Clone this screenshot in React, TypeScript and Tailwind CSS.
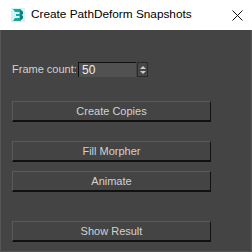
import React from "react";

function MaxIcon() {
  return (
    <svg width="16" height="16" viewBox="0 0 16 16" className="shrink-0">
      <rect x="1" y="1" width="14" height="14" fill="#d8f2f1" />
      <path d="M3 2h7l3 3v2l-2 1 2 1v2l-3 3H3l2-3h4l1-1-1-1H6V7h3l1-1-1-1H5z" fill="#14a8a8" />
      <path d="M10 2l3 3v2l-2 1 2 1v2l-3 3z" fill="#0b7f82" />
    </svg>
  );
}

function Btn({ label }: { label: string }) {
  return (
    <button className="w-[199px] h-[21px] bg-[#444444] border-t border-l border-t-[#5a5a5a] border-l-[#5a5a5a] border-r border-r-[#111111] border-b-2 border-b-[#111111] text-[11px] text-[#d2d2d2] leading-none">
      {label}
    </button>
  );
}

export default function App() {
  return (
    <div className="w-[252px] h-[252px] flex flex-col overflow-hidden" style={{ fontFamily: '"Liberation Sans", Arial, sans-serif' }}>
      <div className="h-[30px] bg-white flex items-center pl-[10px] pr-[9px] gap-[5px]">
        <MaxIcon />
        <span className="text-[11.8px] text-black flex-1 leading-none pb-[1px] whitespace-nowrap">Create PathDeform Snapshots</span>
        <svg width="11" height="11" viewBox="0 0 11 11">
          <path d="M0.5 0.5L10.5 10.5M10.5 0.5L0.5 10.5" stroke="#111" strokeWidth="1" />
        </svg>
      </div>
      <div className="flex-1 bg-[#444444] border-x border-b border-[#555555] flex flex-col pl-[11px] pt-[32px] text-[#d2d2d2]">
        <div className="flex items-center h-[15px]">
          <span className="text-[11px] leading-none whitespace-nowrap shrink-0 w-[66px]">Frame count:</span>
          <div className="w-[58px] h-[15px] bg-[#515151] border-t border-l border-[#111111] flex items-center pl-[3px] text-[12px] text-[#eeeeee] leading-none shrink-0">
            50
          </div>
          <div className="ml-[1px] w-[11px] h-[15px] bg-[#474747] border border-[#2a2a2a] flex flex-col items-center justify-center gap-[2px] shrink-0">
            <div className="w-0 h-0 border-l-[3px] border-r-[3px] border-b-[3px] border-l-transparent border-r-transparent border-b-[#cccccc]" />
            <div className="w-0 h-0 border-l-[3px] border-r-[3px] border-t-[3px] border-l-transparent border-r-transparent border-t-[#cccccc]" />
          </div>
        </div>
        <div className="mt-[24px] flex flex-col">
          <Btn label="Create Copies" />
          <div className="h-[19px]" />
          <Btn label="Fill Morpher" />
          <div className="h-[9px]" />
          <Btn label="Animate" />
          <div className="h-[29px]" />
          <Btn label="Show Result" />
        </div>
      </div>
    </div>
  );
}
